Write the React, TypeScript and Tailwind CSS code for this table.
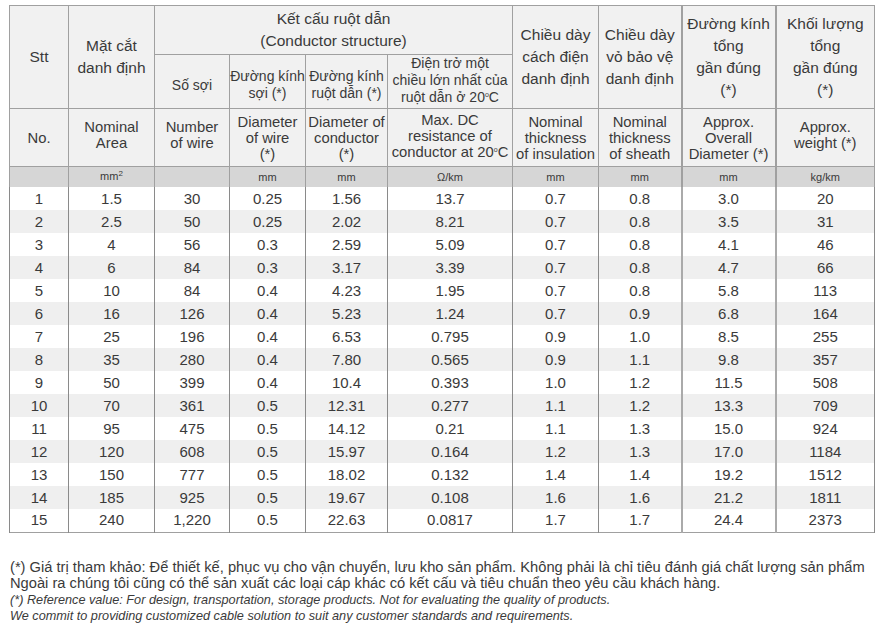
const rows: string[][] = [
  ["1", "1.5", "30", "0.25", "1.56", "13.7", "0.7", "0.8", "3.0", "20"],
  ["2", "2.5", "50", "0.25", "2.02", "8.21", "0.7", "0.8", "3.5", "31"],
  ["3", "4", "56", "0.3", "2.59", "5.09", "0.7", "0.8", "4.1", "46"],
  ["4", "6", "84", "0.3", "3.17", "3.39", "0.7", "0.8", "4.7", "66"],
  ["5", "10", "84", "0.4", "4.23", "1.95", "0.7", "0.8", "5.8", "113"],
  ["6", "16", "126", "0.4", "5.23", "1.24", "0.7", "0.9", "6.8", "164"],
  ["7", "25", "196", "0.4", "6.53", "0.795", "0.9", "1.0", "8.5", "255"],
  ["8", "35", "280", "0.4", "7.80", "0.565", "0.9", "1.1", "9.8", "357"],
  ["9", "50", "399", "0.4", "10.4", "0.393", "1.0", "1.2", "11.5", "508"],
  ["10", "70", "361", "0.5", "12.31", "0.277", "1.1", "1.2", "13.3", "709"],
  ["11", "95", "475", "0.5", "14.12", "0.21", "1.1", "1.3", "15.0", "924"],
  ["12", "120", "608", "0.5", "15.97", "0.164", "1.2", "1.3", "17.0", "1184"],
  ["13", "150", "777", "0.5", "18.02", "0.132", "1.4", "1.4", "19.2", "1512"],
  ["14", "185", "925", "0.5", "19.67", "0.108", "1.6", "1.6", "21.2", "1811"],
  ["15", "240", "1,220", "0.5", "22.63", "0.0817", "1.7", "1.7", "24.4", "2373"],
];

const widths = [59, 86, 75, 76, 82, 125, 86, 83, 94, 99];

const hd = "border border-[#a0a0a0] bg-[#f1f1f1] text-center align-middle font-normal p-0";

function Deg() {
  return <span className="relative -top-[5px] text-[7px]">o</span>;
}

export default function App() {
  return (
    <main className="w-[883px] h-[635px] bg-white text-[#3a3a3a] font-['Liberation_Sans',Arial,sans-serif] overflow-hidden">
      <div className="pt-[5px] pl-[9px]">
        <table className="table-fixed border-collapse w-[865px] border border-[#a0a0a0]">
          <colgroup>
            {widths.map((w, i) => (
              <col key={i} style={{ width: w }} />
            ))}
          </colgroup>
          <thead className="text-[15.5px] leading-[22px]">
            <tr className="h-[49px]">
              <th rowSpan={2} className={hd}>Stt</th>
              <th rowSpan={2} className={hd}>Mặt cắt<br />danh định</th>
              <th colSpan={4} className={hd}>Kết cấu ruột dẫn<br />(Conductor structure)</th>
              <th rowSpan={2} className={hd}>Chiều dày<br />cách điện<br />danh định</th>
              <th rowSpan={2} className={hd}>Chiều dày<br />vỏ bảo vệ<br />danh định</th>
              <th rowSpan={2} className={`${hd} border-l-2`}>Đường kính<br />tổng<br />gần đúng<br />(*)</th>
              <th rowSpan={2} className={`${hd} border-l-2`}>Khối lượng<br />tổng<br />gần đúng<br />(*)</th>
            </tr>
            <tr className="h-[52px] text-[14px] leading-[17px]">
              <th className={`${hd} pt-[8px]`}>Số sợi</th>
              <th className={`${hd} pt-[6px]`}>Đường kính<br />sợi (*)</th>
              <th className={`${hd} pt-[6px]`}>Đường kính<br />ruột dẫn (*)</th>
              <th className={hd}>Điện trở một<br />chiều lớn nhất của<br />ruột dẫn ở 20<Deg />C</th>
            </tr>
            <tr className="h-[58px] text-[14.8px] leading-[16px]">
              <th className={hd}>No.</th>
              <th className={`${hd} align-top pt-[10px]`}>Nominal<br />Area</th>
              <th className={`${hd} align-top pt-[10px]`}>Number<br />of wire</th>
              <th className={hd}>Diameter<br />of wire<br />(*)</th>
              <th className={hd}>Diameter of<br />conductor<br />(*)</th>
              <th className={hd}>Max. DC<br />resistance of<br />conductor at 20<Deg />C</th>
              <th className={hd}>Nominal<br />thickness<br />of insulation</th>
              <th className={hd}>Nominal<br />thickness<br />of sheath</th>
              <th className={`${hd} border-l-2`}>Approx.<br />Overall<br />Diameter (*)</th>
              <th className={`${hd} border-l-2 align-top pt-[10px]`}>Approx.<br />weight (*)</th>
            </tr>
            <tr className="h-[18px] text-[11px] leading-[18px]">
              {["", "mm²", "", "mm", "mm", "Ω/km", "mm", "mm", "mm", "kg/km"].map((u, i) => (
                <th
                  key={i}
                  className={`p-0 font-normal text-center bg-[#d6d6d6] border-x border-[#a0a0a0] ${i >= 8 ? "border-l-2" : ""}`}
                >
                  {u === "mm²" ? (
                    <>
                      mm<span className="relative -top-[4px] text-[8px]">2</span>
                    </>
                  ) : (
                    u
                  )}
                </th>
              ))}
            </tr>
          </thead>
          <tbody className="text-[15px]">
            {rows.map((r, ri) => (
              <tr key={ri} className={`h-[23px] ${ri % 2 === 1 ? "bg-[#efefef]" : "bg-white"}`}>
                {r.map((c, ci) => (
                  <td
                    key={ci}
                    className={`text-center p-0 leading-[22px] border-x border-[#8a8a8a] ${ci >= 8 ? "border-l-2 border-l-[#aaaaaa]" : ""}`}
                  >
                    {c}
                  </td>
                ))}
              </tr>
            ))}
          </tbody>
        </table>
      </div>
      <div className="pl-[10px] pt-[26px] whitespace-nowrap">
        <p className="text-[14.7px] leading-[16px]">
          (*) Giá trị tham khảo: Để thiết kế, phục vụ cho vận chuyển, lưu kho sản phẩm. Không phải là chỉ tiêu đánh giá chất lượng sản phẩm
        </p>
        <p className="text-[14.7px] leading-[16px]">
          Ngoài ra chúng tôi cũng có thể sản xuất các loại cáp khác có kết cấu và tiêu chuẩn theo yêu cầu khách hàng.
        </p>
        <p className="text-[12.7px] leading-[16px] italic mt-[1px]">
          (*) Reference value: For design, transportation, storage products. Not for evaluating the quality of products.
        </p>
        <p className="text-[12.7px] leading-[16px] italic">
          We commit to providing customized cable solution to suit any customer standards and requirements.
        </p>
      </div>
    </main>
  );
}
